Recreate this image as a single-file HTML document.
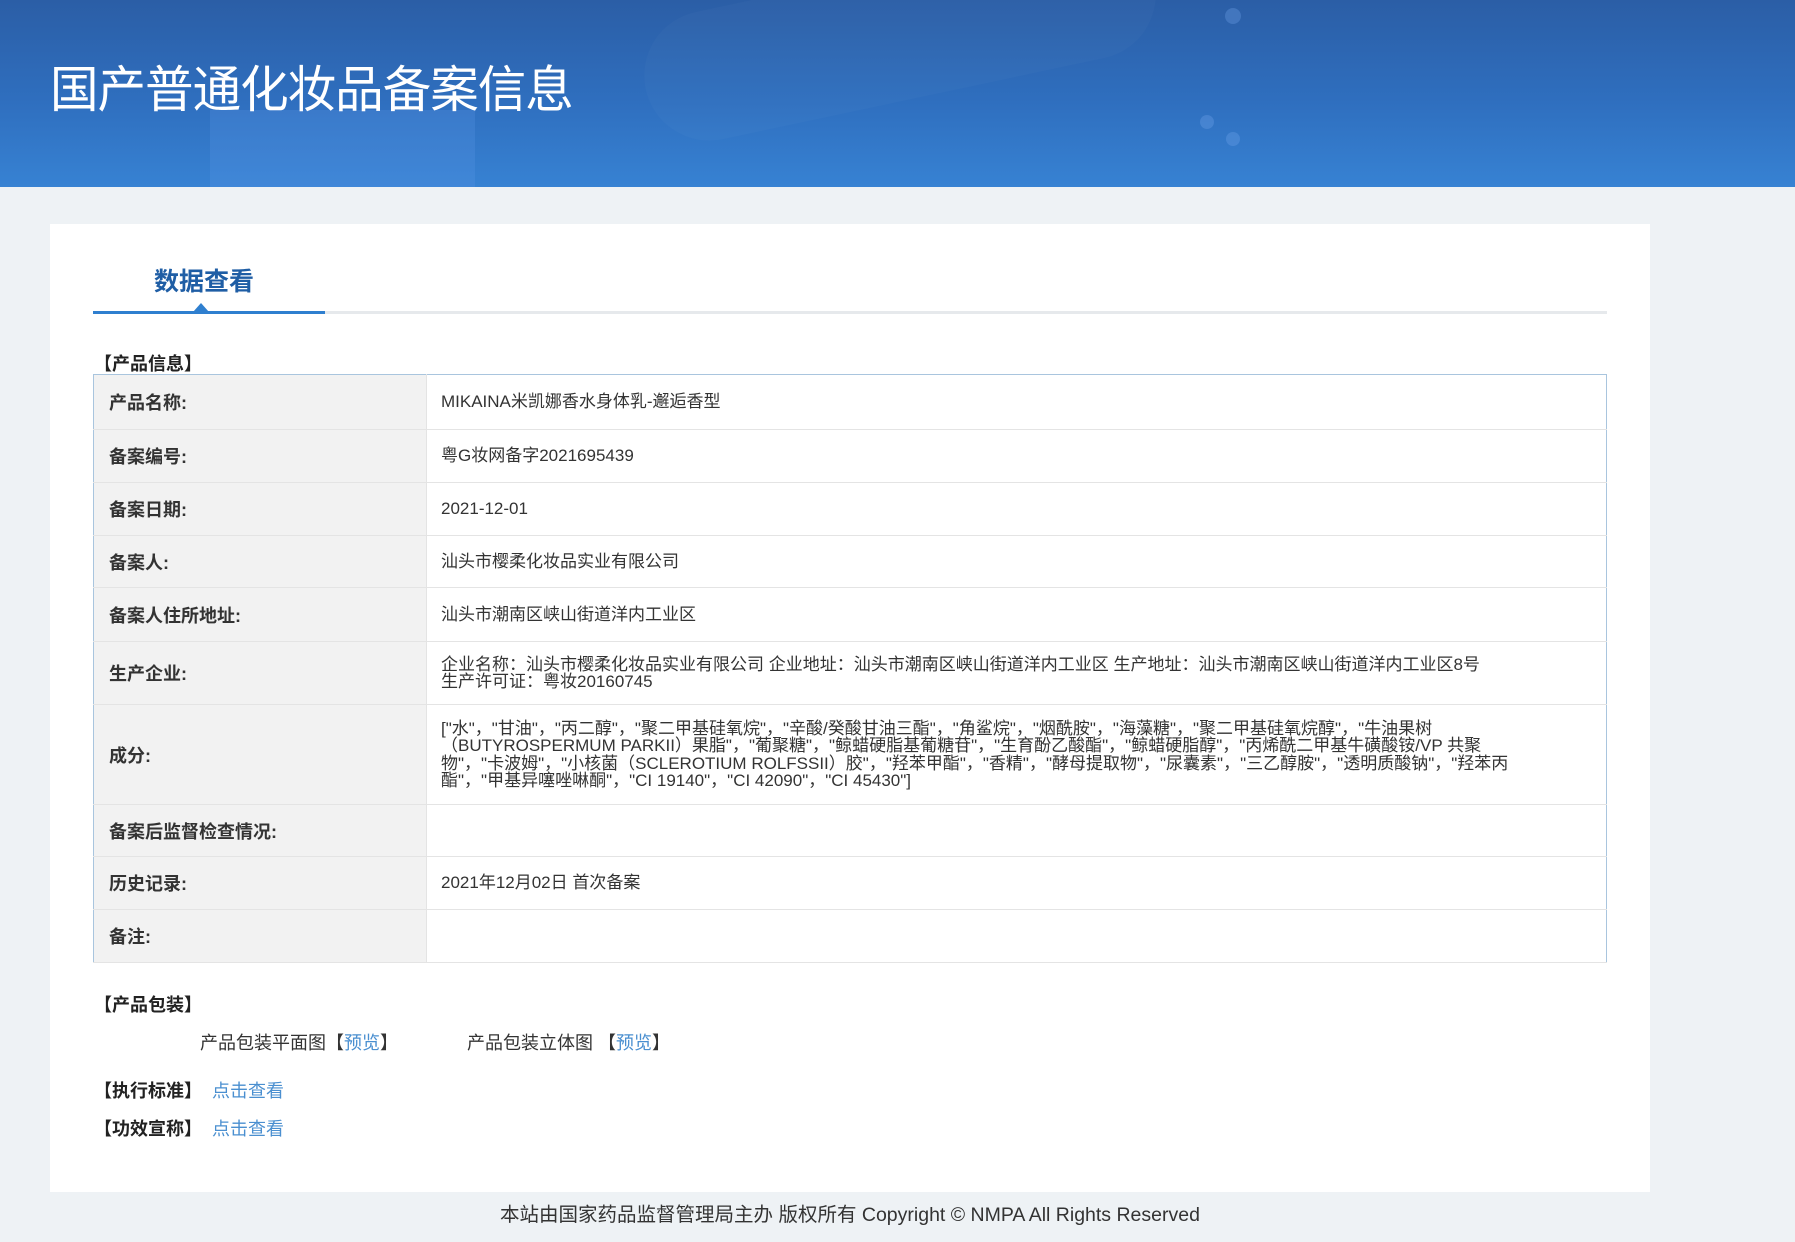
<!DOCTYPE html>
<html><head><meta charset="utf-8"><style>
*{margin:0;padding:0;box-sizing:border-box}
body{width:1795px;height:1242px;overflow:hidden;background:#eef2f5;font-family:"Liberation Sans","Noto Sans CJK SC",sans-serif;color:#333;position:relative}
.hd{position:absolute;left:0;top:0;width:1795px;height:187px;background:linear-gradient(180deg,#2b5ea6 0%,#2f6fbf 55%,#3782d3 100%);overflow:hidden}
.hd .b1{position:absolute;left:210px;top:110px;width:265px;height:90px;background:rgba(90,150,230,.25)}
.hd .b2{position:absolute;left:640px;top:-30px;width:520px;height:130px;border-radius:65px;background:rgba(255,255,255,.025);transform:rotate(-12deg)}
.hd .d{position:absolute;border-radius:50%;background:rgba(120,170,240,.3)}
.hd h1{position:absolute;left:50px;top:60px;font-size:50px;font-weight:400;color:#fff;letter-spacing:-1px;line-height:60px;transform:scaleX(.97);transform-origin:left}
.card{position:absolute;left:50px;top:224px;width:1600px;height:968px;background:#fff}
.tab{position:absolute;left:88px;top:262px;width:232px;text-align:center;font-size:25px;font-weight:bold;color:#1f5ea5}
.tabline{position:absolute;left:93px;top:311px;width:1514px;height:3px;background:#e6e9ec}
.tabline i{position:absolute;left:0;top:0;width:232px;height:3px;background:#2f7fcf}
.tri{position:absolute;left:193px;top:303px;width:0;height:0;border-left:8px solid transparent;border-right:8px solid transparent;border-bottom:9px solid #2f7fcf}
.sec{position:absolute;font-size:18px;font-weight:bold;color:#222}
table{position:absolute;left:93px;top:374px;width:1514px;border-collapse:collapse;border:1px solid #a9c5de}
td{border-bottom:1px solid #e4e4e4;font-size:17px;vertical-align:middle}
td.l{width:333px;background:#f2f2f2;font-weight:bold;padding-left:15px;font-size:18px;color:#333;border-right:1px solid #e4e4e4}
td.v{padding-left:14px;padding-right:80px;color:#333;line-height:17.5px}
.t{position:absolute;font-size:18px;color:#333}
a{color:#4a8fd0;text-decoration:none}
.sec a{margin-left:10px}
.foot{position:absolute;left:500px;width:700px;top:1198px;text-align:center;font-size:19.5px;color:#333;white-space:nowrap}
</style></head><body>
<div class="hd"><div class="b2"></div><div class="b1"></div>
<div class="d" style="left:1225px;top:8px;width:16px;height:16px"></div>
<div class="d" style="left:1200px;top:115px;width:14px;height:14px"></div>
<div class="d" style="left:1226px;top:132px;width:14px;height:14px"></div>
<h1>国产普通化妆品备案信息</h1></div>
<div class="card"></div>
<div class="tab">数据查看</div>
<div class="tabline"><i></i></div>
<div class="tri"></div>
<div class="sec" style="left:94px;top:350px">【产品信息】</div>
<table>
<tr style="height:55px"><td class="l">产品名称:</td><td class="v">MIKAINA米凯娜香水身体乳-邂逅香型</td></tr>
<tr style="height:53px"><td class="l">备案编号:</td><td class="v">粤G妆网备字2021695439</td></tr>
<tr style="height:53px"><td class="l">备案日期:</td><td class="v">2021-12-01</td></tr>
<tr style="height:52px"><td class="l">备案人:</td><td class="v">汕头市樱柔化妆品实业有限公司</td></tr>
<tr style="height:54px"><td class="l">备案人住所地址:</td><td class="v">汕头市潮南区峡山街道洋内工业区</td></tr>
<tr style="height:63px"><td class="l">生产企业:</td><td class="v">企业名称：汕头市樱柔化妆品实业有限公司 企业地址：汕头市潮南区峡山街道洋内工业区 生产地址：汕头市潮南区峡山街道洋内工业区8号<br>生产许可证：粤妆20160745</td></tr>
<tr style="height:100px"><td class="l">成分:</td><td class="v">["水"，"甘油"，"丙二醇"，"聚二甲基硅氧烷"，"辛酸/癸酸甘油三酯"，"角鲨烷"，"烟酰胺"，"海藻糖"，"聚二甲基硅氧烷醇"，"牛油果树（BUTYROSPERMUM PARKII）果脂"，"葡聚糖"，"鲸蜡硬脂基葡糖苷"，"生育酚乙酸酯"，"鲸蜡硬脂醇"，"丙烯酰二甲基牛磺酸铵/VP 共聚物"，"卡波姆"，"小核菌（SCLEROTIUM ROLFSSII）胶"，"羟苯甲酯"，"香精"，"酵母提取物"，"尿囊素"，"三乙醇胺"，"透明质酸钠"，"羟苯丙酯"，"甲基异噻唑啉酮"，"CI 19140"，"CI 42090"，"CI 45430"]</td></tr>
<tr style="height:52px"><td class="l">备案后监督检查情况:</td><td class="v"></td></tr>
<tr style="height:53px"><td class="l">历史记录:</td><td class="v">2021年12月02日 首次备案</td></tr>
<tr style="height:53px"><td class="l">备注:</td><td class="v"></td></tr>
</table>
<div class="sec" style="left:94px;top:991px">【产品包装】</div>
<div class="t" style="left:200px;top:1029px">产品包装平面图【<a>预览</a>】</div>
<div class="t" style="left:467px;top:1029px">产品包装立体图 【<a>预览</a>】</div>
<div class="sec" style="left:94px;top:1077px">【执行标准】<a style="font-weight:normal">点击查看</a></div>
<div class="sec" style="left:94px;top:1115px">【功效宣称】<a style="font-weight:normal">点击查看</a></div>
<div class="foot">本站由国家药品监督管理局主办 版权所有 Copyright © NMPA All Rights Reserved</div>
</body></html>
